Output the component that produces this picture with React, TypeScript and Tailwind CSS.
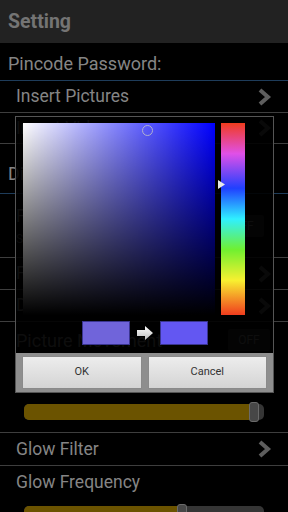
const Chevron = () => (
  <svg width="16" height="18" viewBox="0 0 16 18" className="shrink-0">
    <polyline points="4,2 12,9 4,16" fill="none" stroke="#5e5e5e" strokeWidth="4" strokeLinejoin="miter" />
  </svg>
);

const Row = ({ title, chevron = true, h = "h-[32px]" }: { title: string; chevron?: boolean; h?: string }) => (
  <div className={`flex ${h} items-center justify-between border-b border-[#3e3e3e] pl-4 pr-4`}>
    <span className="text-[17.5px] text-[#858585]">{title}</span>
    {chevron && <Chevron />}
  </div>
);

const Slider = ({ pct }: { pct: number }) => (
  <div className="relative mx-6 h-[16px] rounded-[5px] bg-[#353535]">
    <div className="h-full rounded-[5px] bg-[#6b5300]" style={{ width: `${pct}%` }} />
    <div
      className="absolute top-[-2px] h-[20px] w-[10px] -translate-x-1/2 rounded-[3px] border border-[#6a6a6a] bg-[#474747]"
      style={{ left: `${pct}%` }}
    />
  </div>
);

const Toggle = () => (
  <div className="flex h-[22px] w-[42px] items-center justify-center rounded-[2px] bg-[#2c2c2c] text-[12px] text-[#8a8a8a]">OFF</div>
);

export default function App() {
  return (
    <div className="relative h-[512px] w-[288px] overflow-hidden bg-black font-['Roboto',sans-serif]">
      {/* header */}
      <div className="flex h-[43px] items-center bg-[#222222] px-2">
        <span className="text-[19.5px] font-bold text-[#747474]">Setting</span>
      </div>

      {/* list */}
      <div className="flex h-[38px] items-center border-b border-[#1e3c5a] px-2 pt-[4px]">
        <span className="text-[18px] text-[#858585]">Pincode Password:</span>
      </div>
      <Row title="Insert Pictures" />
      <Row title="Insert Videos" h="h-[31px]" />
      <div className="flex h-[50px] items-end border-b border-[#1e3c5a] px-2 pb-[6px]">
        <span className="text-[18px] text-[#858585]">Display:</span>
      </div>
      <div className="flex h-[64px] items-center justify-between border-b border-[#3e3e3e] pl-4 pr-6">
        <div className="flex flex-col">
          <span className="text-[17.5px] text-[#858585]">Fit Pictures</span>
          <span className="text-[12px] text-[#6a6a6a]">Scale pictures to fit</span>
        </div>
        <Toggle />
      </div>
      <Row title="Frame Style" />
      <Row title="Duration" />
      <div className="flex h-[36px] items-center justify-between pl-4 pr-[18px]">
        <span className="text-[18px] text-[#858585]">Picture Movement</span>
        <Toggle />
      </div>
      <div className="h-[38px]" />
      <div className="flex h-[37px] items-center border-b border-[#3e3e3e] pb-[4px]">
        <div className="w-full">
          <Slider pct={96} />
        </div>
      </div>
      <Row title="Glow Filter" h="h-[33px]" />
      <div className="flex h-[33px] items-center pl-4">
        <span className="text-[17.5px] text-[#858585]">Glow Frequency</span>
      </div>
      <div className="pt-[7px]">
        <Slider pct={66} />
      </div>

      {/* color picker dialog */}
      <div className="absolute left-[15px] top-[116px] flex h-[277px] w-[259px] flex-col border border-[#555] bg-black/90">
        <div className="flex gap-[6px] pl-[7px] pt-[6px]">
          <div className="relative h-[192px] w-[192px] bg-[#0000ff]">
            <div className="absolute inset-0 bg-gradient-to-r from-white to-transparent" />
            <div className="absolute inset-0 bg-gradient-to-b from-transparent to-black" />
            <div className="absolute left-[119px] top-[2px] h-[11px] w-[11px] rounded-full border border-[#b0b0d0]" />
          </div>
          <div className="relative h-[192px] w-[24px] bg-[linear-gradient(to_bottom,#f03c1e,#e050e8_16%,#2040ff_34%,#30f0ff_50%,#70f030_66%,#f8f030_82%,#f03c1e)]">
            <svg className="absolute left-[-3px] top-[57px]" width="7" height="9" viewBox="0 0 7 9">
              <polygon points="0,0 7,4.5 0,9" fill="#e8e8e8" />
            </svg>
          </div>
        </div>
        <div className="mt-[6px] flex items-center justify-center gap-[7px]">
          <div className="h-[24px] w-[48px] border border-[#3a3590] bg-[#7064da]" />
          <svg width="16" height="14" viewBox="0 0 16 14">
            <defs>
              <linearGradient id="ag" x1="0" y1="0" x2="0" y2="1">
                <stop offset="0" stopColor="#ffffff" />
                <stop offset="1" stopColor="#bdbdbd" />
              </linearGradient>
            </defs>
            <polygon points="0,4 8,4 8,0 16,7 8,14 8,10 0,10" fill="url(#ag)" />
          </svg>
          <div className="h-[24px] w-[48px] border border-[#3a3590] bg-[#6357f2]" />
        </div>
        <div className="mt-auto flex h-[39px] gap-[6px] bg-[#8e8e8e] px-[6px] pt-[3px] pb-[3px]">
          <button className="flex flex-1 items-center justify-center border border-[#8a8a8a] bg-gradient-to-b from-[#ededed] to-[#d4d4d4] text-[11px] text-[#333]">
            OK
          </button>
          <button className="flex flex-1 items-center justify-center border border-[#8a8a8a] bg-gradient-to-b from-[#ededed] to-[#d4d4d4] text-[11px] text-[#333]">
            Cancel
          </button>
        </div>
      </div>
    </div>
  );
}
